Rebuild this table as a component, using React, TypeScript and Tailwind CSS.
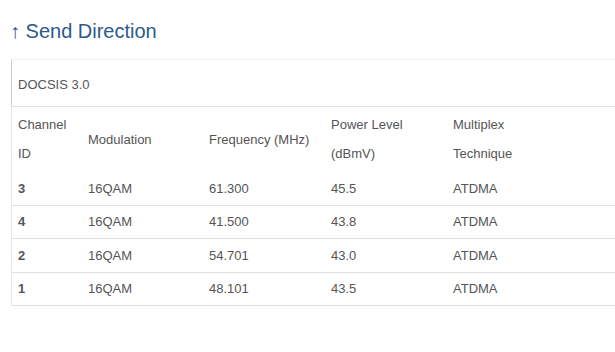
import React from "react";

const rows = [
  { id: "3", mod: "16QAM", freq: "61.300", power: "45.5", mux: "ATDMA", h: "h-[34px]" },
  { id: "4", mod: "16QAM", freq: "41.500", power: "43.8", mux: "ATDMA", h: "h-[33px]" },
  { id: "2", mod: "16QAM", freq: "54.701", power: "43.0", mux: "ATDMA", h: "h-[34px]" },
  { id: "1", mod: "16QAM", freq: "48.101", power: "43.5", mux: "ATDMA", h: "h-[33px]" },
];

export default function App() {
  return (
    <div
      className="w-[615px] h-[352px] bg-white overflow-hidden text-[13px] text-[#555]"
      style={{ fontFamily: '"Liberation Sans", Arial, sans-serif' }}
    >
      <h2 className="pl-[10px] pt-[20px] text-[20px] leading-[22px] text-[#2c5a8c]">
        ↑ Send Direction
      </h2>
      <div className="ml-[11px] mt-[17px]">
        <div className="h-[48px] border-t border-t-[#f2f2f2] border-l border-l-[#d0d0d0] border-b border-b-[#e0e0e0] flex items-center pl-[6px] pt-[3px]">
          DOCSIS 3.0
        </div>
        <div className="border-l border-l-[#e6e6e6]">
          <div className="grid grid-cols-[70px_121px_122px_122px_1fr] h-[65px] items-center leading-[29px] pb-[1px]">
            <div className="pl-[6px]">
              Channel
              <br />
              ID
            </div>
            <div className="pl-[6px]">Modulation</div>
            <div className="pl-[6px]">Frequency (MHz)</div>
            <div className="pl-[6px]">
              Power Level
              <br />
              (dBmV)
            </div>
            <div className="pl-[6px]">
              Multiplex
              <br />
              Technique
            </div>
          </div>
          {rows.map((r) => (
            <div
              key={r.id}
              className={`grid grid-cols-[70px_121px_122px_122px_1fr] items-center border-b border-b-[#e0e0e0] ${r.h}`}
            >
              <div className="pl-[6px] font-bold">{r.id}</div>
              <div className="pl-[6px]">{r.mod}</div>
              <div className="pl-[6px]">{r.freq}</div>
              <div className="pl-[6px]">{r.power}</div>
              <div className="pl-[6px]">{r.mux}</div>
            </div>
          ))}
        </div>
      </div>
    </div>
  );
}
